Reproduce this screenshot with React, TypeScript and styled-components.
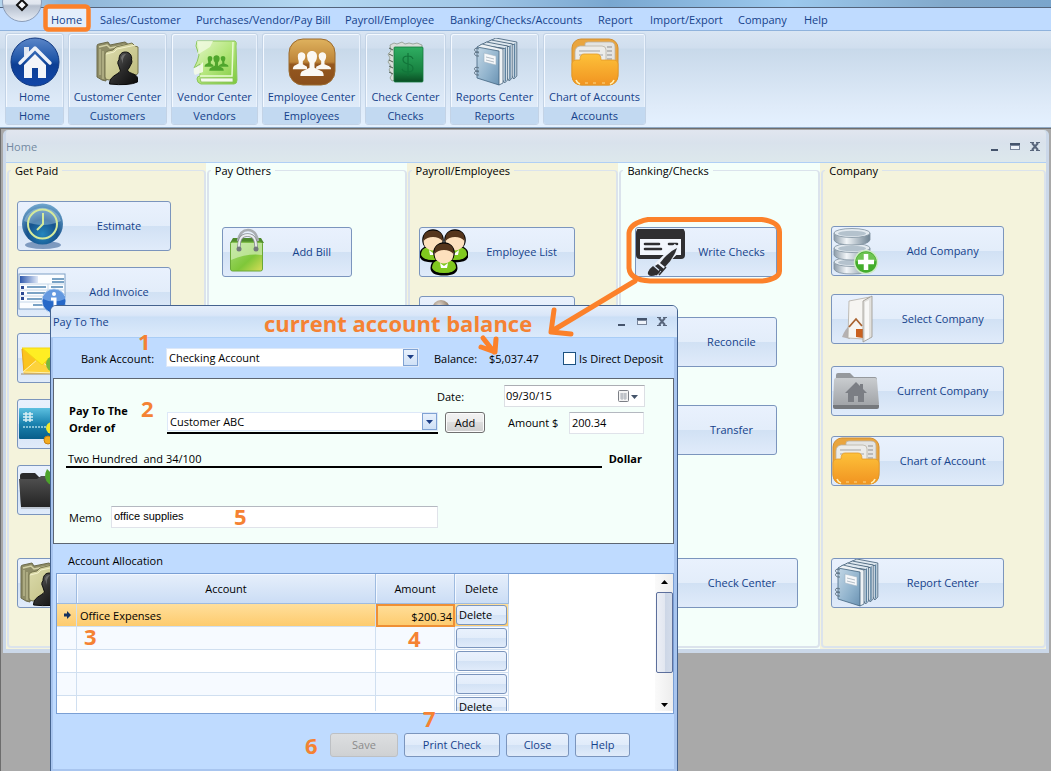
import React from "react";
import styled, { createGlobalStyle } from "styled-components";

const UI = '"Open Sans", "Noto Sans", sans-serif';
const NAVY = "#15428b";
const ORANGE = "#f58233";

const Global = createGlobalStyle`
  *, *::before, *::after { box-sizing: border-box; }
  html, body { margin: 0; padding: 0; }
  body { background: #a9a9a9; font: 11px/15px ${UI}; color: #000; }
  button, input, select { font: inherit; color: inherit; margin: 0; border-radius: 0; }
  svg { display: block; flex: none; }
`;

const Desktop = styled.div`
  position: relative;
  min-height: 100vh;
  display: flex;
  flex-direction: column;
  overflow: hidden;
`;

/* ---------- ribbon ---------- */

const TitleStrip = styled.header`
  height: 8px;
  flex: none;
  background: linear-gradient(90deg, #b5d5ee 0, #8fb6d8 6%, #b4d8f2 30%, #a2c8e8 45%, #79a7d0 58%, #9cc9ee 75%, #82a9cb 90%, #7aa5cc 100%);
  border-bottom: 1px solid #53647c;
`;

const Orb = styled.button`
  position: absolute;
  left: 2px;
  top: -18px;
  width: 40px;
  height: 40px;
  padding: 15px 0 0;
  border: 1px solid #8b9db8;
  border-radius: 50%;
  background: linear-gradient(#fff 0, #dfe5ee 55%, #b5bfce 60%, #e6ecf5 100%);
  display: flex;
  justify-content: center;
`;

const TabBar = styled.nav`
  display: flex;
  height: 23px;
  flex: none;
  padding-left: 47px;
  background: #bfdbff;
  border-bottom: 1px solid #8fb2dc;
`;

const Tab = styled.button<{ $w: number; $active?: boolean }>`
  width: ${(p) => p.$w}px;
  flex: none;
  padding: 0 0 0 4px;
  border: 0;
  background: ${(p) => (p.$active ? "linear-gradient(90deg, #e4eefb 42px, transparent 42px)" : "none")};
  color: ${NAVY};
  text-align: left;
  white-space: nowrap;
`;

const Ribbon = styled.div`
  display: flex;
  flex: none;
  gap: 4px;
  height: 97px;
  padding: 2px 2px 2px 5px;
  background: linear-gradient(#d9e5f3 0, #d0deee 17px, #c8d9ea 18px, #dfebf9 75px, #e4f1ff 100%);
  border-bottom: 1px solid #8fa9c4;
`;

const Group = styled.section<{ $w: number }>`
  width: ${(p) => p.$w}px;
  flex: none;
  display: flex;
  flex-direction: column;
  border: 1px solid #c3d3e6;
  border-radius: 3px;
  box-shadow: inset 1px 1px 0 #f4f9ff, inset -1px 0 0 #eaf2fc;
  overflow: hidden;
`;

const GroupButton = styled.button`
  flex: 1;
  display: flex;
  flex-direction: column;
  align-items: center;
  gap: 2px;
  padding: 3px 0 0;
  border: 0;
  background: none;
  color: ${NAVY};
  white-space: nowrap;
`;

const GroupIcon = styled.span`
  display: flex;
  align-items: center;
  height: 50px;
`;

const Caption = styled.div`
  height: 17px;
  line-height: 17px;
  text-align: center;
  color: ${NAVY};
  background: #c2d9f1;
`;

/* ---------- home window ---------- */

const Workspace = styled.main`
  flex: 1;
  padding: 1px 2px 20px 2px;
  border-top: 1px solid #6d6d6d;
  border-left: 1px solid #6d6d6d;
  background: #a9a9a9;
`;

const HomeWindow = styled.section`
  border: solid #cbd8e9;
  border-width: 0 3px 4px 3px;
  border-radius: 5px 5px 0 0;
  background: #dbe6ec;
`;

const HomeTitle = styled.div`
  display: flex;
  align-items: center;
  justify-content: space-between;
  height: 33px;
  padding: 1px 5px 0 0;
  border-bottom: 1px solid #b0cff5;
  background: linear-gradient(#e1e6ef 0, #d9e2ec 40%, #dde8ec 100%);
  color: #7389a2;
  border-radius: 5px 5px 0 0;
`;

const Columns = styled.div`
  display: grid;
  grid-template-columns: 200fr 201fr 212fr 202fr 226fr;
`;

const Column = styled.div<{ $tone: "cream" | "mint" }>`
  padding: 0 0 1px 1px;
  background: ${(p) => (p.$tone === "cream" ? "#f4f3dc" : "#f4fffa")};
`;

const Panel = styled.fieldset<{ $pad: number; $top: number }>`
  margin: 0;
  min-width: 0;
  height: 485px;
  padding: ${(p) => p.$top}px 0 0 ${(p) => p.$pad}px;
  border: 2px solid #dbe3ec;
  border-top-width: 1px;
  border-radius: 4px;
  display: flex;
  flex-direction: column;
  align-items: flex-start;
`;

const Legend = styled.legend<{ $pull: number }>`
  margin-left: -${(p) => p.$pull}px;
  padding: 0 4px;
  height: 15px;
`;

const Tile = styled.button<{ $w: number; $gap?: number }>`
  width: ${(p) => p.$w}px;
  height: 50px;
  flex: none;
  margin: ${(p) => p.$gap ?? 0}px 0 0;
  padding: 0;
  display: flex;
  align-items: center;
  border: 1px solid #7b95bd;
  border-radius: 3px;
  background: linear-gradient(#e9f1fd 0, #e3edfa 49%, #d1e1f4 50%, #e0ebfa 100%);
  color: ${NAVY};
`;

const IconSlot = styled.span`
  width: 50px;
  flex: none;
`;

const TileLabel = styled.span`
  flex: 1;
  padding-bottom: 2px;
  text-align: center;
  white-space: nowrap;
`;

const WindowButtons = styled.div`
  display: flex;
  gap: 8px;
`;

const WindowButton = styled.button`
  width: 12px;
  height: 12px;
  padding: 0;
  border: 0;
  background: none;
`;

/* ---------- cheque dialog ---------- */

const Dialog = styled.section`
  position: absolute;
  left: 50px;
  top: 305px;
  width: 628px;
  border: 1px solid #45638f;
  border-radius: 6px 6px 0 0;
  background: #bfdbff;
  overflow: hidden;
`;

const DialogTitle = styled.div`
  display: flex;
  align-items: center;
  justify-content: space-between;
  height: 32px;
  padding: 0 9px 0 2px;
  border-bottom: 1px solid #a9cdf6;
  background: linear-gradient(#e6effb 0, #d9e6f8 30%, #cbdff6 36%, #dceafb 100%);
  color: ${NAVY};
`;

const DialogBody = styled.form`
  border: solid #a8c5ef;
  border-width: 0 3px 3px 2px;
`;

const BankRow = styled.div`
  display: flex;
  align-items: center;
  height: 40px;
  padding-left: 28px;
  white-space: nowrap;
`;

const Label = styled.label<{ $w: number }>`
  width: ${(p) => p.$w}px;
  flex: none;
  white-space: nowrap;
`;

const BalanceLabel = styled(Label)`
  margin-left: 15px;
`;

const Balance = styled.output`
  width: 74px;
  flex: none;
`;

const Combo = styled.span<{ $w: number }>`
  display: flex;
  width: ${(p) => p.$w}px;
  height: 19px;
  flex: none;
  background: #fff;
  border: 1px solid #dde8f8;
`;

const BankCombo = styled(Combo)`
  margin-bottom: 2px;
`;

const Select = styled.select`
  appearance: none;
  flex: 1;
  min-width: 0;
  padding: 0 2px;
  border: 0;
  background: #fff;
`;

const DropArrow = styled.span`
  width: 15px;
  display: flex;
  align-items: center;
  justify-content: center;
  border: 1px solid #7fa2d3;
  background: linear-gradient(#e8f1fd, #d0e1f6);
  pointer-events: none;
`;

const Check = styled.input`
  appearance: none;
  width: 13px;
  height: 13px;
  flex: none;
  border: 1px solid #1c5180;
  background: #fff;
`;

const CheckLabel = styled.label`
  display: flex;
  align-items: center;
  gap: 3px;
`;

const Cheque = styled.div`
  border: 1px solid #5d6672;
  background: #f4fffa;
  padding: 6px 0 15px;
`;

const ChequeTop = styled.div`
  display: flex;
`;

const PayeeLabel = styled.label`
  width: 113px;
  flex: none;
  padding: 17px 0 0 15px;
  font-weight: 700;
  line-height: 17px;
`;

const ChequeFields = styled.div`
  display: flex;
  flex-direction: column;
  gap: 5px;
`;

const DateRow = styled.div`
  display: flex;
  align-items: center;
  padding-left: 270px;
`;

const DateBox = styled.span`
  display: flex;
  align-items: center;
  width: 141px;
  height: 22px;
  padding-right: 5px;
  border: 1px solid #dcdfe4;
  border-top-color: #abadb3;
  background: #fff;
`;

const PlainInput = styled.input`
  flex: 1;
  min-width: 0;
  padding: 0 1px 2px;
  border: 0;
  background: #fff;
`;

const PayeeRow = styled.div`
  display: flex;
  align-items: flex-start;
`;

const Underlined = styled.span`
  padding-bottom: 1px;
  border-bottom: 2px solid #000;
`;

const AddButton = styled.button`
  width: 40px;
  height: 21px;
  margin: 0 23px 0 7px;
  padding: 0;
  border: 1px solid #707070;
  border-radius: 3px;
  background: linear-gradient(#f2f2f2 0, #ebebeb 49%, #dddddd 50%, #cfcfcf 100%);
  box-shadow: inset 0 0 0 1px #fbfbfb;
`;

const AmountLabel = styled(Label)`
  line-height: 22px;
`;

const Field = styled.input<{ $w: number; $plain?: boolean }>`
  width: ${(p) => p.$w}px;
  height: 22px;
  padding: 0 2px 2px;
  border: 1px solid #e0e3ea;
  border-top-color: #b4b8c0;
  background: #fff;
  font-family: ${(p) => (p.$plain ? '"Liberation Sans", sans-serif' : "inherit")};
`;

const WordsRow = styled.div`
  display: flex;
  gap: 7px;
  height: 17px;
  margin: 15px 31px 0 12px;
`;

const Words = styled.div`
  width: 536px;
  padding-left: 2px;
  border-bottom: 2px solid #000;
  white-space: pre;
`;

const MemoRow = styled.div`
  display: flex;
  align-items: center;
  margin-top: 38px;
  padding-left: 15px;
`;

const AllocationTitle = styled.h2`
  margin: 0;
  padding: 9px 0 5px 15px;
  font: inherit;
`;

const GridBox = styled.div`
  display: flex;
  justify-content: space-between;
  height: 141px;
  margin: 0 0 0 3px;
  padding-bottom: 2px;
  border: 1px solid #7a9fd4;
  background: #fff;
`;

const GridClip = styled.div`
  overflow: hidden;
`;

const Table = styled.table`
  width: 452px;
  table-layout: fixed;
  border-collapse: separate;
  border-spacing: 0;
`;

const Th = styled.th`
  height: 30px;
  padding: 0;
  font-weight: 400;
  border-right: 1px solid #9ebbe0;
  border-bottom: 1px solid #9ebbe0;
  background: linear-gradient(#e6effb, #cbddf5);
  box-shadow: inset 1px 1px 0 #f3f8ff;
`;

const Row = styled.tr<{ $kind: "gold" | "tint" | "white" }>`
  background: ${(p) =>
    p.$kind === "gold" ? "linear-gradient(#ffdf9b, #fdca6c)" : p.$kind === "tint" ? "#f6faff" : "#fff"};
`;

const Td = styled.td<{ $focus?: boolean }>`
  height: 23px;
  padding: 0 2px 0 3px;
  border-right: 1px solid #d0dff0;
  border-bottom: 1px solid #d0dff0;
  ${(p) =>
    p.$focus
      ? "padding: 3px 3px 0 0; text-align: right; line-height: 12px; border: 0; box-shadow: inset 0 0 0 2px #ee8f35;"
      : ""}
`;

const ButtonCell = styled(Td)`
  padding: 0 0 0 1px;
`;

const RowButton = styled.button`
  display: block;
  width: 51px;
  height: 20px;
  padding: 0 0 1px 2px;
  text-align: left;
  border: 1px solid #7b95bd;
  border-radius: 3px;
  background: linear-gradient(#e9f1fd 0, #e3edfa 49%, #d3e2f5 50%, #e0ebfa 100%);
`;

const ScrollTrack = styled.div`
  display: flex;
  flex-direction: column;
  align-items: center;
  justify-content: space-between;
  width: 18px;
  background: linear-gradient(90deg, #fafafa, #ededed);
  padding: 5px 0 4px;
`;

const ScrollThumb = styled.div`
  width: 17px;
  height: 81px;
  margin: 0 0 23px;
  border: 1px solid #5c6f9c;
  border-radius: 2px;
  background: linear-gradient(90deg, #eceff6 0, #e2e7f0 50%, #ccd6e6 51%, #d3dcea 100%);
`;

const Footer = styled.footer`
  display: flex;
  gap: 6px;
  padding: 19px 0 12px 277px;
`;

const Action = styled.button<{ $w: number }>`
  width: ${(p) => p.$w}px;
  height: 24px;
  padding: 0 0 1px;
  border: 1px solid #7b95bd;
  border-radius: 3px;
  background: linear-gradient(#e9f1fd 0, #e0ebfa 49%, #d1e1f5 50%, #e0ebfa 100%);
  color: ${NAVY};
  &:disabled {
    border-color: #bdc0c4;
    background: linear-gradient(#dcdee0, #cfd1d3);
    color: #8b8b8b;
  }
`;

/* ---------- annotations ---------- */

const Markup = styled.svg`
  position: absolute;
  left: 0;
  top: 0;
  pointer-events: none;
`;

const Note = styled.span<{ $x: number; $y: number }>`
  position: absolute;
  left: ${(p) => p.$x}px;
  top: ${(p) => p.$y}px;
  font: 700 22px/20px ${UI};
  color: ${ORANGE};
  white-space: nowrap;
  pointer-events: none;
`;

/* ---------- icons ---------- */

type IconProps = { size?: number };

const HomeIcon = ({ size = 50 }: IconProps) => (
  <svg width={size} height={size} viewBox="0 0 50 50">
    <defs>
      <linearGradient id="hm" x1="0" y1="0" x2="0" y2="1">
        <stop offset="0" stopColor="#5b86c8" />
        <stop offset=".45" stopColor="#1f56a8" />
        <stop offset=".55" stopColor="#0d3f94" />
        <stop offset="1" stopColor="#1246a8" />
      </linearGradient>
    </defs>
    <circle cx="25" cy="25" r="24" fill="url(#hm)" stroke="#133a80" />
    <path d="M14 10h5v6l-5 4z" fill="#dfe6f1" />
    <path d="M10 26 25 11 40 26" fill="none" stroke="#eef2f8" strokeWidth="3.4" strokeLinecap="round" strokeLinejoin="round" />
    <path d="M14 28 25 17 36 28V41H28V31H22V41H14z" fill="#f3f5f9" />
  </svg>
);

const PersonFolder = ({ size = 48 }: IconProps) => (
  <svg width={size} height={size} viewBox="0 0 48 48">
    <defs>
      <linearGradient id="pf" x1="0" y1="0" x2="1" y2="1">
        <stop offset="0" stopColor="#dddcae" />
        <stop offset="1" stopColor="#bdbb7c" />
      </linearGradient>
      <linearGradient id="pp" x1="0" y1="0" x2="1" y2="1">
        <stop offset="0" stopColor="#6a6a6a" />
        <stop offset=".5" stopColor="#2c2c2c" />
        <stop offset="1" stopColor="#0a0a0a" />
      </linearGradient>
    </defs>
    <path d="M3 8q0-2 2-2l9-2 2 3 15-3 4 3v5L12 15v28l-4-1-5-3z" fill="#8e8c66" stroke="#6c6a4a" />
    <path d="M5 9 13 7l3 3 15-3" fill="none" stroke="#d3d1a6" strokeWidth="1.500" />
    <path d="M6 11v26M9 13v28" stroke="#b6b48a" strokeWidth="1.500" />
    <path d="M11 16q0-2 3-3l5-1 3-3 16-4 3 3 3 1v26q0 2-4 2l-25 5q-4 0-4-3z" fill="url(#pf)" stroke="#77754f" />
    <path d="M12 16 20 14l3-3 19-4" fill="none" stroke="#f3f1cb" />
    <path d="M25 22c0-6 3-8 6.500-8s7 3 6 8c1 1 0 4-1 5q-1 3-3 5c1 4 9 3 10 8v4q-9 4-28 2c0-8 8-9 11-13q-1-3-2-6c-1-1-1-4 .5-5z" fill="url(#pp)" stroke="#0c0c0c" />
    <path d="M27 20q1-4 5-4-4 4-3 10z" fill="#9a9a9a" opacity=".5" />
  </svg>
);

const People = ({ fill }: { fill: string }) => (
  <g fill={fill}>
    <path d="M7 11c0-6 9-6 9 0 0 3-1 5-3 6v4l5 3v3H1q0-4 3-5l4-2v-3q-1-2-1-6z" />
    <path d="M32 11c0-6 9-6 9 0 0 3-1 5-2 6v4l5 2q3 1 3 4H29v-3l6-3v-4q-3-2-3-6z" />
    <path d="M18 11c0-8 12-8 12 0 0 4-1 6-3 8v6l8 4q3 1 3 6H10q0-5 3-6l8-4v-6q-3-3-3-8z" />
  </g>
);

const VendorIcon = () => (
  <svg width="48" height="48" viewBox="0 0 48 48">
    <defs>
      <linearGradient id="vn" x1="0" y1="0" x2="1" y2="1">
        <stop offset="0" stopColor="#e6f7cb" />
        <stop offset=".5" stopColor="#b4e67c" />
        <stop offset="1" stopColor="#7cc93c" />
      </linearGradient>
    </defs>
    <path d="M6 3h38q2 1 1 5l1 34q0 4-3 4H10q-4-1-4-5 0-3 3-3V26L3 30q4-7 5-13L5 8z" fill="url(#vn)" stroke="#8cc75c" />
    <path d="M9 38h32l1-34" fill="none" stroke="#e9fbd2" strokeWidth="1.500" />
    <path d="M9 40h33v4H10z" fill="#f6faee" stroke="#88bf58" strokeWidth=".8" />
    <path d="M6 3h16l-3 6-13 8q3-6 0-14z" fill="#effae0" opacity=".8" />
    <path d="M3 30q-1 5 1 7l8-3V24q-4 5-9 6z" fill="#f4fbe9" opacity=".9" />
    <svg x="13" y="15" width="25" height="20" viewBox="0 2 48 36">
      <People fill="#4fa62c" />
    </svg>
  </svg>
);

const EmployeeIcon = () => (
  <svg width="48" height="48" viewBox="0 0 48 48">
    <defs>
      <linearGradient id="em" x1="0" y1="0" x2="0" y2="1">
        <stop offset="0" stopColor="#dfb25e" />
        <stop offset=".5" stopColor="#bd8438" />
        <stop offset=".55" stopColor="#95581f" />
        <stop offset="1" stopColor="#8a4f1c" />
      </linearGradient>
    </defs>
    <rect x="1" y="1" width="46" height="46" rx="14" fill="url(#em)" stroke="#9b6a2d" />
    <svg x="4" y="10" width="40" height="31" viewBox="0 2 48 36">
      <People fill="#fbf8f3" />
    </svg>
  </svg>
);

const CheckBook = () => (
  <svg width="48" height="48" viewBox="0 0 48 48">
    <defs>
      <linearGradient id="cb" x1="0" y1="0" x2="0" y2="1">
        <stop offset="0" stopColor="#2fae62" />
        <stop offset=".7" stopColor="#17803f" />
        <stop offset="1" stopColor="#0a4d24" />
      </linearGradient>
    </defs>
    <path d="m8 7 4-2 3 1 5-2 3 2 4-1 4 1 4-1 5 2v4L13 12v30l-3 1-2-3 2-4-3-4 2-4-3-4 2-4-2-4 3-3z" fill="#d9ddd9" stroke="#8d988d" strokeWidth=".8" />
    <path d="M7 10l4 2M7 16l4 2M7 22l4 2M7 28l4 2M7 34l4 2" stroke="#4d5a4d" />
    <rect x="12" y="9" width="29" height="35" rx="1" fill="url(#cb)" stroke="#157a3c" strokeWidth=".8" />
    <path d="M31 21q-1-3-5-3-5 0-5 3.500t5 4.500q5 1 5 4.500t-5 3.500-6-3M26 15v23" fill="none" stroke="#12753a" strokeWidth="1.200" />
  </svg>
);

const Binders = () => (
  <svg width="48" height="48" viewBox="0 0 48 48">
    <defs>
      <linearGradient id="bn" x1="0" y1="0" x2="1" y2="1">
        <stop offset="0" stopColor="#c3d7e6" />
        <stop offset=".6" stopColor="#8fb2cc" />
        <stop offset="1" stopColor="#6b93b3" />
      </linearGradient>
    </defs>
    {[3, 2, 1].map((i) => (
      <g key={i} transform={`translate(${i * 4.6} ${-i * 2})`}>
        <path d="M5 9 11 6l21 4v34l-3 3z" fill="#dfe8ef" stroke="#3d5a73" strokeWidth=".8" />
        <path d="M29 12v34l1.500-1V11z" fill="#5d82a0" />
        <path d="M5 9 29 12.500" stroke="#3d5a73" />
      </g>
    ))}
    <path d="M6 9 11 6l21 5v34l-4 2z" fill="#eef2f5" stroke="#47657e" strokeWidth=".8" />
    <path d="M6 9 28 13v34L6 40z" fill="url(#bn)" stroke="#41637f" strokeWidth=".8" />
    <path d="m13 15 12 3v9l-12-3z" fill="#f6f8fa" stroke="#9fb3c3" strokeWidth=".6" />
    <path d="m15 19 8 2M15 22l8 2" stroke="#aab6c0" strokeWidth=".9" />
    <path d="M8 11c-6-3-6 4 0 3M8 15c-6-3-6 4 0 3M8 30c-6-3-6 4 0 3M8 34c-6-3-6 4 0 3" fill="none" stroke="#5d7283" />
  </svg>
);

const DocsFolder = () => (
  <svg width="48" height="48" viewBox="0 0 48 48">
    <defs>
      <linearGradient id="df" x1="0" y1="0" x2="0" y2="1">
        <stop offset="0" stopColor="#fdc13a" />
        <stop offset="1" stopColor="#f19421" />
      </linearGradient>
    </defs>
    <rect x="1" y="1" width="46" height="46" rx="9" fill="#e9a53f" stroke="#d08e30" />
    <path d="M14 6q0-2 3-2h22q5 0 5 5v18H14z" fill="#e4e4e2" stroke="#b9b3a6" strokeWidth=".8" />
    <path d="M36 9h5M36 13h5M36 17h5M36 21h5" stroke="#8f8f8f" />
    <path d="M4 14q0-5 5-6h22q4 0 4 4v14H4z" fill="#ececea" stroke="#b9b3a6" strokeWidth=".8" />
    <path d="M8 13h21M8 17h24" stroke="#a3a3a3" />
    <path d="M1 26q0-4 4-4h4q0-6 4-6h13q4 0 4 6h13q4 0 4 4v9q0 12-10 12H11Q1 47 1 37z" fill="url(#df)" stroke="#e59a26" strokeWidth=".8" />
    <path d="M5 42q1 3 4 4M43 42q-1 3-4 4" fill="none" stroke="#fff2b8" strokeWidth="1.600" />
    <path d="M14 45h3M22 45h3M31 45h3" stroke="#fbd98c" />
  </svg>
);

const ClockIcon = () => (
  <svg width="48" height="48" viewBox="0 0 48 48">
    <defs>
      <radialGradient id="ck" cx=".5" cy=".75" r=".8">
        <stop offset="0" stopColor="#2486bd" />
        <stop offset=".45" stopColor="#17538d" />
        <stop offset="1" stopColor="#7fb4d8" />
      </radialGradient>
    </defs>
    <ellipse cx="25" cy="43" rx="18" ry="4" fill="#5478a6" opacity=".7" />
    <circle cx="24.500" cy="22" r="20.500" fill="url(#ck)" />
    <path d="M6 19a19 17 0 0 1 37 0q-18 8-37 0z" fill="#cfe7f5" opacity=".35" />
    <circle cx="24.500" cy="22" r="14.500" fill="none" stroke="#d5ea9b" strokeWidth="2" />
    <path d="M25 11v11l-6 6" fill="none" stroke="#d5ea9b" strokeWidth="2" />
  </svg>
);

const InvoiceIcon = () => (
  <svg width="48" height="48" viewBox="0 0 48 48">
    <defs>
      <linearGradient id="iv">
        <stop offset="0" stopColor="#2f59ad" />
        <stop offset="1" stopColor="#e0e9f8" />
      </linearGradient>
    </defs>
    <rect x="1" y="6" width="46" height="35" fill="#fbfdff" stroke="#7ea0c6" />
    <rect x="2" y="8" width="18" height="7" fill="url(#iv)" />
    <path d="M34 11h12M34 14h12M9 19h19M9 25h19M9 31h16M15 37h12M33 19h12" stroke="#4f84b3" strokeWidth="1.400" />
    <path d="M2 16h44M2 22h44M2 28h44M2 34h44M30 16v18" stroke="#c6d8ea" />
    <path d="M3 18h3v3H3zM3 24h3v3H3zM3 29h3v3H3z" fill="#2b4a94" />
    <circle cx="36" cy="33" r="12" fill="#2668c8" stroke="#b9d2f0" />
    <path d="M25 31a11 10 0 0 1 22 0q-11 5-22 0z" fill="#8dbaf0" opacity=".6" />
    <circle cx="36" cy="26" r="2" fill="#fff" />
    <path d="M33 31h4v9" fill="none" stroke="#fff" strokeWidth="3" />
  </svg>
);

const MailIcon = () => (
  <svg width="48" height="48" viewBox="0 0 48 48">
    <path d="M3 40h40" stroke="#a89c80" strokeWidth="2" opacity=".6" />
    <path d="M4 15h38l-2 24H6z" fill="#fbc41e" stroke="#e8a51a" />
    <path d="M5 38 20 25l8 6 12 8z" fill="#fdd23b" stroke="#fff2b0" />
    <path d="M4 14h38L24 31z" fill="#ffee23" stroke="#f5d613" />
    <circle cx="36" cy="30" r="8" fill="#79b83b" />
  </svg>
);

const CardIcon = () => (
  <svg width="48" height="48" viewBox="0 0 48 48">
    <defs>
      <linearGradient id="cd" x1="0" y1="0" x2="0" y2="1">
        <stop offset="0" stopColor="#5cc0e0" />
        <stop offset=".5" stopColor="#1b83b0" />
        <stop offset="1" stopColor="#075d8a" />
      </linearGradient>
    </defs>
    <rect x="1" y="8" width="46" height="31" rx="1" fill="url(#cd)" />
    <path d="M5 14h10M5 17h10M5 20h10M8 12v10M12 12v10" stroke="#d9f0f5" strokeWidth="1.500" />
    <path d="M5 27h26" stroke="#a9d9e8" strokeWidth="1.500" strokeDasharray="2 1" />
    <circle cx="34" cy="28" r="6" fill="#f2e72c" />
    <circle cx="30" cy="40" r="4" fill="#f2ab1f" stroke="#c67f12" />
  </svg>
);

const BlackFolder = () => (
  <svg width="48" height="48" viewBox="0 0 48 48">
    <defs>
      <linearGradient id="bf" x1="0" y1="0" x2="0" y2="1">
        <stop offset="0" stopColor="#525252" />
        <stop offset="1" stopColor="#242424" />
      </linearGradient>
    </defs>
    <path d="M2 10q0-3 3-3h12l4 4h24v29H3z" fill="#2b2b2b" />
    <path d="M1 13h18l4-3h22v31H3z" fill="url(#bf)" />
    <path d="M3 42h42" stroke="#777" opacity=".6" />
    <path d="M31 18q-7-6-2-15 8 6 6 16z" fill="#4da32b" />
  </svg>
);

const BagIcon = () => (
  <svg width="48" height="48" viewBox="0 0 48 48">
    <defs>
      <linearGradient id="bg" x1="0" y1="0" x2="1" y2="1">
        <stop offset="0" stopColor="#a6dd78" />
        <stop offset=".6" stopColor="#7fc739" />
        <stop offset="1" stopColor="#d9dd58" />
      </linearGradient>
    </defs>
    <path d="M7 15 10 10h28l3 5z" fill="#4e8a2c" />
    <path d="M15 13Q17 2 25 2t10 11" fill="none" stroke="#a9adb1" strokeWidth="2.500" />
    <rect x="7.500" y="14" width="32" height="29" rx="2" fill="url(#bg)" stroke="#6aa838" />
    <path d="M8 15h31v12q-14-2-31 5z" fill="#dff3cb" opacity=".6" />
    <path d="M16 21Q15 7 24.500 7T33 21" fill="none" stroke="#8c9094" strokeWidth="3.500" />
    <path d="M16 21Q15 7 24.500 7T33 21" fill="none" stroke="#eceeef" strokeWidth="1.800" />
    <circle cx="16" cy="21" r="2.500" fill="#73797d" />
    <circle cx="33" cy="21" r="2.500" fill="#73797d" />
  </svg>
);

const Head = ({ x, y }: { x: number; y: number }) => (
  <g transform={`translate(${x} ${y})`}>
    <path d="M-7 8q-5 2-5 7 0 6 12 6t12-6q0-5-5-7z" fill="#7cc51c" stroke="#000" strokeWidth="3" />
    <circle r="9.500" fill="#fbcf9f" stroke="#000" strokeWidth="2.600" />
    <path d="M-8 8q-4 2-4 7 2 5 12 5t12-5q0-5-4-7z" fill="#80c81f" />
    <path d="M-9.500 0q0 6 3 8 6 5 13 0 3-2 3-8 0-5-9.500-5T-9.500 0z" fill="#fde0bd" />
    <path d="M-9.500 1q-1-10.500 9.500-10.500T9.500 1Q6-3 0-3t-9.500 4z" fill="#55351c" />
    <path d="m-4 10 4 3 4-3-1 5h-6z" fill="#fff" />
  </g>
);

const TrioIcon = () => (
  <svg width="48" height="48" viewBox="0 0 48 48">
    <Head x={13} y={12} />
    <Head x={35} y={12} />
    <Head x={24} y={25} />
  </svg>
);

const SoloIcon = () => (
  <svg width="48" height="48" viewBox="0 0 48 48">
    <defs>
      <radialGradient id="so" cx=".4" cy=".3">
        <stop offset="0" stopColor="#e2d8cd" />
        <stop offset="1" stopColor="#94826f" />
      </radialGradient>
    </defs>
    <circle cx="21" cy="12" r="9" fill="url(#so)" />
    <path d="M8 42q0-18 13-18t13 18z" fill="#8c7b6a" />
  </svg>
);

const WriteCheckIcon = () => (
  <svg width="50" height="48" viewBox="0 0 50 48">
    <rect x="2" y="3" width="45" height="26" rx="2" fill="#f3f7fd" stroke="#2f2f31" strokeWidth="4" />
    <path d="M1 2q0-1 1-1h45q1 0 1 1v9H1z" fill="#2f2f31" />
    <path d="M9 16h14M9 21h16M33 16h8" stroke="#2f2f31" strokeWidth="2.600" strokeLinecap="round" />
    <path d="M42 19 22 39" stroke="#eef3fb" strokeWidth="9" />
    <path d="M41 20q-9 4-17 15l5 4Q38 30 41 20z" fill="#2f2f31" />
    <path d="M22 36l6 5-2 3-7-6zM17 38l7 6q-3 4-9 4-4-1-3-4 2-4 5-6z" fill="#2f2f31" />
    <path d="m30 39-7 8M26 40l-6 7" stroke="#2f2f31" strokeWidth="1.500" />
  </svg>
);

const DatabaseIcon = () => (
  <svg width="48" height="48" viewBox="0 0 48 48">
    <defs>
      <linearGradient id="db">
        <stop offset="0" stopColor="#8d9ca9" />
        <stop offset=".35" stopColor="#f1f5f8" />
        <stop offset="1" stopColor="#6f8393" />
      </linearGradient>
    </defs>
    {[35, 21, 6].map((y) => (
      <g key={y} stroke="#7f909e" strokeWidth=".8">
        <path d={`M2 ${y}v7q2 5 18 5t18-5v-7z`} fill="url(#db)" />
        <ellipse cx="20" cy={y} rx="18" ry="4.500" fill="#e3eaf0" />
        <ellipse cx="20" cy={y + 0.5} rx="14" ry="2.800" fill="#b4c2cd" stroke="none" />
      </g>
    ))}
    <circle cx="34" cy="35" r="11.500" fill="#43ad2b" stroke="#cfe9c7" strokeWidth="1.500" />
    <path d="M24 34a10 9 0 0 1 20 0q-10 4-20 0z" fill="#9bdc7c" opacity=".5" />
    <path d="M34 27v16M26 35h16" stroke="#fff" strokeWidth="4.500" />
  </svg>
);

const SelectIcon = () => (
  <svg width="48" height="48" viewBox="0 0 48 48">
    <path d="M10 42q3-8 8-12v14z" fill="#8f7c6b" opacity=".5" />
    <path d="M17 6 38 2l-6 4v38l-16-1z" fill="#f6f5f2" stroke="#b3ada4" strokeWidth=".8" />
    <path d="m17 32 7-8 6 7" fill="none" stroke="#a8622f" strokeWidth="1.800" />
    <path d="M24 34h7v9l-7-1z" fill="#c9611f" />
    <path d="M31 6 40 1v41l-9 5z" fill="#e2e1de" stroke="#9b968e" strokeWidth=".8" />
    <path d="m33 7 4-2v38l-4 2z" fill="#f8f8f7" />
  </svg>
);

const GreyFolder = () => (
  <svg width="48" height="48" viewBox="0 0 48 48">
    <defs>
      <linearGradient id="gf" x1="0" y1="0" x2="0" y2="1">
        <stop offset="0" stopColor="#c9cccf" />
        <stop offset="1" stopColor="#a0a3a7" />
      </linearGradient>
    </defs>
    <path d="M4 8q0-2 2-2h12l4 4h21q2 0 2 3v24H3z" fill="#96999d" />
    <path d="M2 13q0-2 2-2h39q2 0 2 2l2 24q0 2-2 2H3q-2 0-2-2z" fill="url(#gf)" />
    <path d="M1 38h46v2q0 2-2 2H3q-2 0-2-2z" fill="#75787c" />
    <path d="m24 15 4 4v-2h3v5l4 4h-3v9h-6v-6h-4v6h-6v-9h-3z" fill="#7b7e84" />
  </svg>
);

const Down = ({ color = "#1d3f86" }: { color?: string }) => (
  <svg width="7" height="4" viewBox="0 0 7 4">
    <path d="M0 0h7L3.500 4z" fill={color} />
  </svg>
);

const WinControls = () => (
  <WindowButtons>
    <WindowButton type="button" aria-label="Minimize">
      <svg width="12" height="12" viewBox="0 0 12 12">
        <path d="M2 8h7v2H2z" fill="#45546c" />
      </svg>
    </WindowButton>
    <WindowButton type="button" aria-label="Maximize">
      <svg width="12" height="12" viewBox="0 0 12 12">
        <path d="M1 2h10v3H1z" fill="#45546c" />
        <rect x="1.500" y="4.500" width="9" height="4" fill="#eef3fa" stroke="#77849a" />
      </svg>
    </WindowButton>
    <WindowButton type="button" aria-label="Close window">
      <svg width="12" height="12" viewBox="0 0 12 12">
        <path d="m3 2 6 7M9 2 3 9" stroke="#59667c" strokeWidth="2" />
        <path d="M1 1.500h4M7 1.500h4M1 9.500h4M7 9.500h4" stroke="#59667c" />
      </svg>
    </WindowButton>
  </WindowButtons>
);

/* ---------- data ---------- */

const tabs: [string, number][] = [
  ["Home", 49],
  ["Sales/Customer", 96],
  ["Purchases/Vendor/Pay Bill", 149],
  ["Payroll/Employee", 105],
  ["Banking/Checks/Accounts", 148],
  ["Report", 52],
  ["Import/Export", 88],
  ["Company", 66],
  ["Help", 40],
];

const groups: { label: string; caption: string; w: number; icon: React.ReactNode }[] = [
  { label: "Home", caption: "Home", w: 59, icon: <HomeIcon /> },
  { label: "Customer Center", caption: "Customers", w: 99, icon: <PersonFolder /> },
  { label: "Vendor Center", caption: "Vendors", w: 87, icon: <VendorIcon /> },
  { label: "Employee Center", caption: "Employees", w: 99, icon: <EmployeeIcon /> },
  { label: "Check Center", caption: "Checks", w: 81, icon: <CheckBook /> },
  { label: "Reports Center", caption: "Reports", w: 89, icon: <Binders /> },
  { label: "Chart of Accounts", caption: "Accounts", w: 103, icon: <DocsFolder /> },
];

type TileData = { label?: string; w: number; gap?: number; icon?: React.ReactNode };
type ColumnData = { title: string; tone: "cream" | "mint"; pad: number; top: number; tiles: TileData[] };

const columns: ColumnData[] = [
  {
    title: "Get Paid",
    tone: "cream",
    pad: 8,
    top: 23,
    tiles: [
      { label: "Estimate", w: 154, icon: <ClockIcon /> },
      { label: "Add Invoice", w: 154, gap: 16, icon: <InvoiceIcon /> },
      { w: 154, gap: 16, icon: <MailIcon /> },
      { w: 154, gap: 16, icon: <CardIcon /> },
      { w: 154, gap: 16, icon: <BlackFolder /> },
      { w: 154, gap: 43, icon: <PersonFolder /> },
    ],
  },
  {
    title: "Pay Others",
    tone: "mint",
    pad: 13,
    top: 49,
    tiles: [{ label: "Add Bill", w: 130, icon: <BagIcon /> }],
  },
  {
    title: "Payroll/Employees",
    tone: "cream",
    pad: 9,
    top: 49,
    tiles: [
      { label: "Employee List", w: 156, icon: <TrioIcon /> },
      { w: 156, gap: 19, icon: <SoloIcon /> },
    ],
  },
  {
    title: "Banking/Checks",
    tone: "mint",
    pad: 14,
    top: 49,
    tiles: [
      { label: "Write Checks", w: 142, icon: <WriteCheckIcon /> },
      { label: "Reconcile", w: 142, gap: 40 },
      { label: "Transfer", w: 142, gap: 38 },
      { label: "Check Center", w: 163, gap: 103 },
    ],
  },
  {
    title: "Company",
    tone: "cream",
    pad: 8,
    top: 48,
    tiles: [
      { label: "Add Company", w: 173, icon: <DatabaseIcon /> },
      { label: "Select Company", w: 173, gap: 18, icon: <SelectIcon /> },
      { label: "Current Company", w: 173, gap: 22, icon: <GreyFolder /> },
      { label: "Chart of Account", w: 173, gap: 20, icon: <DocsFolder /> },
      { label: "Report Center", w: 173, gap: 72, icon: <Binders /> },
    ],
  },
];

const allocation: { account: string; amount: string; action: string; kind: "gold" | "tint" | "white" }[] = [
  { account: "Office Expenses", amount: "$200.34", action: "Delete", kind: "gold" },
  { account: "", amount: "", action: "", kind: "tint" },
  { account: "", amount: "", action: "", kind: "white" },
  { account: "", amount: "", action: "", kind: "tint" },
  { account: "", amount: "", action: "Delete", kind: "white" },
];

const notes: [string, number, number][] = [
  ["current account balance", 264, 313],
  ["1", 138, 331],
  ["2", 141, 398],
  ["3", 84, 626],
  ["4", 408, 628],
  ["5", 234, 506],
  ["6", 305, 735],
  ["7", 423, 708],
];

export default function App() {
  return (
    <Desktop>
      <Global />
      <TitleStrip />
      <TabBar>
        {tabs.map(([t, w], i) => (
          <Tab key={t} type="button" $w={w} $active={i === 0}>
            {t}
          </Tab>
        ))}
      </TabBar>
      <Orb type="button" aria-label="Application menu">
        <svg width="14" height="14" viewBox="0 0 14 14">
          <path d="m7 2 5 5-5 5-5-5z" fill="#f4f7fb" stroke="#111" strokeWidth="2" />
        </svg>
      </Orb>
      <Ribbon>
        {groups.map((g) => (
          <Group key={g.caption} $w={g.w}>
            <GroupButton type="button">
              <GroupIcon>{g.icon}</GroupIcon>
              {g.label}
            </GroupButton>
            <Caption>{g.caption}</Caption>
          </Group>
        ))}
      </Ribbon>
      <Workspace>
        <HomeWindow>
          <HomeTitle>
            Home
            <WinControls />
          </HomeTitle>
          <Columns>
            {columns.map((c) => (
              <Column key={c.title} $tone={c.tone}>
                <Panel $pad={c.pad} $top={c.top}>
                  <Legend $pull={c.pad - 2}>{c.title}</Legend>
                  {c.tiles.map((t, i) => (
                    <Tile key={i} type="button" $w={t.w} $gap={t.gap}>
                      <IconSlot>{t.icon}</IconSlot>
                      <TileLabel>{t.label}</TileLabel>
                    </Tile>
                  ))}
                </Panel>
              </Column>
            ))}
          </Columns>
        </HomeWindow>
      </Workspace>

      <Dialog>
        <DialogTitle>
          Pay To The
          <WinControls />
        </DialogTitle>
        <DialogBody onSubmit={(e) => e.preventDefault()}>
          <BankRow>
            <Label htmlFor="bank" $w={85}>
              Bank Account:
            </Label>
            <BankCombo $w={253}>
              <Select id="bank">
                <option>Checking Account</option>
              </Select>
              <DropArrow>
                <Down />
              </DropArrow>
            </BankCombo>
            <BalanceLabel htmlFor="balance" $w={55}>
              Balance:
            </BalanceLabel>
            <Balance id="balance">$5,037.47</Balance>
            <CheckLabel>
              <Check type="checkbox" />
              Is Direct Deposit
            </CheckLabel>
          </BankRow>
          <Cheque>
            <ChequeTop>
              <PayeeLabel htmlFor="payee">
                Pay To The
                <br />
                Order of
              </PayeeLabel>
              <ChequeFields>
                <DateRow>
                  <Label htmlFor="date" $w={67}>
                    Date:
                  </Label>
                  <DateBox>
                    <PlainInput id="date" defaultValue="09/30/15" />
                    <svg width="21" height="13" viewBox="0 0 21 13">
                      <rect x=".5" y=".5" width="10" height="11" rx="1" fill="#f4f4f4" stroke="#7c7f86" />
                      <path d="M2 4h7M2 6h7M2 8h7M4 3v7M7 3v7" stroke="#a2a7b0" strokeWidth=".8" />
                      <path d="M13 5h7l-3.500 4z" fill="#44546a" />
                    </svg>
                  </DateBox>
                </DateRow>
                <PayeeRow>
                  <Underlined>
                    <Combo $w={271}>
                      <Select id="payee">
                        <option>Customer ABC</option>
                      </Select>
                      <DropArrow>
                        <Down />
                      </DropArrow>
                    </Combo>
                  </Underlined>
                  <AddButton type="button">Add</AddButton>
                  <AmountLabel htmlFor="amount" $w={61}>
                    Amount $
                  </AmountLabel>
                  <Field id="amount" $w={75} defaultValue="200.34" />
                </PayeeRow>
              </ChequeFields>
            </ChequeTop>
            <WordsRow>
              <Words>Two Hundred  and 34/100</Words>
              <b>Dollar</b>
            </WordsRow>
            <MemoRow>
              <Label htmlFor="memo" $w={42}>
                Memo
              </Label>
              <Field id="memo" $w={327} $plain defaultValue="office supplies" />
            </MemoRow>
          </Cheque>
          <AllocationTitle>Account Allocation</AllocationTitle>
          <GridBox>
            <GridClip>
              <Table>
                <colgroup>
                  <col width="20" />
                  <col width="299" />
                  <col width="79" />
                  <col width="54" />
                </colgroup>
                <thead>
                  <tr>
                    <Th />
                    <Th>Account</Th>
                    <Th>Amount</Th>
                    <Th>Delete</Th>
                  </tr>
                </thead>
                <tbody>
                  {allocation.map((r, i) => (
                    <Row key={i} $kind={r.kind}>
                      <Td>
                        {i === 0 && (
                          <svg width="14" height="10" viewBox="0 0 14 10">
                            <path d="M4 3.500h3V1l4 4-4 4V6.500H4z" fill="#14315f" />
                          </svg>
                        )}
                      </Td>
                      <Td>{r.account}</Td>
                      <Td $focus={i === 0}>{r.amount}</Td>
                      <ButtonCell>
                        <RowButton type="button">{r.action}</RowButton>
                      </ButtonCell>
                    </Row>
                  ))}
                </tbody>
              </Table>
            </GridClip>
            <ScrollTrack>
              <svg width="7" height="5" viewBox="0 0 7 5">
                <path d="M0 5h7L3.500 1z" />
              </svg>
              <ScrollThumb />
              <Down color="#000" />
            </ScrollTrack>
          </GridBox>
          <Footer>
            <Action type="button" disabled $w={68}>
              Save
            </Action>
            <Action type="button" $w={96}>
              Print Check
            </Action>
            <Action type="button" $w={63}>
              Close
            </Action>
            <Action type="button" $w={55}>
              Help
            </Action>
          </Footer>
        </DialogBody>
      </Dialog>

      <Markup width="800" height="400" viewBox="0 0 800 400" fill="none" stroke="#fc812a" strokeLinecap="round" strokeLinejoin="round">
        <rect x="45.500" y="6.500" width="43" height="23" rx="3" strokeWidth="4.500" />
        <path d="M648 219.500H762Q779.500 222 779.500 232V271Q779 279 762 281H650Q630 280 629 268V233Q630 223 648 219.500z" strokeWidth="5" />
        <path d="M635 281 552 331M554 310 551 332 571 334" strokeWidth="5" />
        <path d="M483 338 494 352M496 339 495 352 481 347" strokeWidth="5" />
      </Markup>
      {notes.map(([t, x, y]) => (
        <Note key={t} $x={x} $y={y}>
          {t}
        </Note>
      ))}
    </Desktop>
  );
}
